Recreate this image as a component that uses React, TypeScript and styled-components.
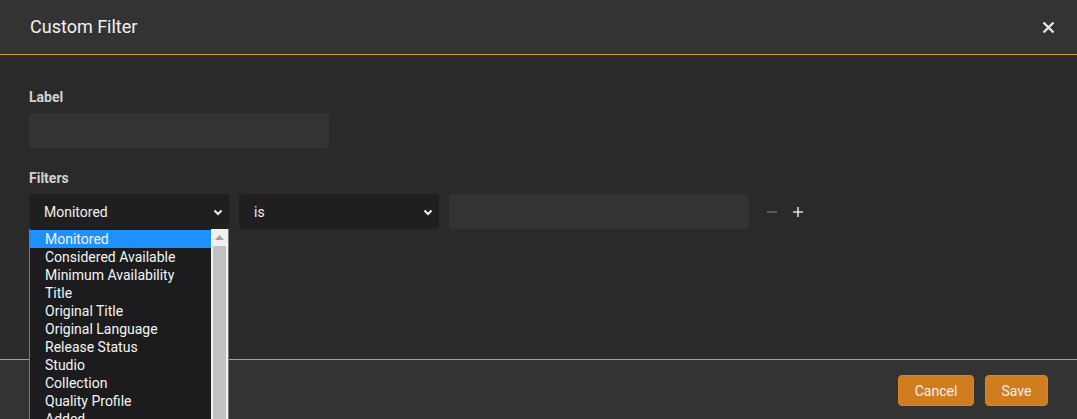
import React from "react";
import styled, { createGlobalStyle } from "styled-components";

const Global = createGlobalStyle`
  html, body { margin: 0; padding: 0; background: #2a2a2a; }
  body { font-family: Roboto, "Open Sans", sans-serif; color: #ccc; overflow: hidden; }
  * { box-sizing: border-box; }
`;

const Modal = styled.div`
  width: 1077px;
  height: 419px;
  display: flex;
  flex-direction: column;
  background: #2a2a2a;
  overflow: hidden;
`;

const Header = styled.div`
  height: 55px;
  flex: none;
  display: flex;
  align-items: center;
  justify-content: space-between;
  padding: 0 22px 0 30px;
  background: #333333;
  border-bottom: 1px solid #d89b2a;
`;

const Title = styled.div`
  font-size: 18px;
  color: #f2f2f2;
  padding-bottom: 1px;
`;

const Close = styled.button`
  background: none;
  border: 0;
  padding: 0;
  width: 14px;
  height: 14px;
  display: flex;
  align-items: center;
  justify-content: center;
  cursor: pointer;
`;

const Body = styled.div`
  flex: 1;
  padding: 32px 29px 0;
  display: flex;
  flex-direction: column;
`;

const FieldLabel = styled.div`
  font-size: 14px;
  font-weight: 700;
  color: #d2d2d2;
  line-height: 20px;
  margin-bottom: 6px;
`;

const TextInput = styled.div<{ $w: number }>`
  width: ${(p) => p.$w}px;
  height: 35px;
  background: #333333;
  border-radius: 4px;
`;

const Group = styled.div`
  margin-bottom: 20px;
`;

const Row = styled.div`
  display: flex;
  align-items: center;
  gap: 10px;
`;

const SelectWrap = styled.div`
  position: relative;
`;

const Select = styled.div`
  width: 200px;
  height: 35px;
  background: #1f1f1f;
  border-radius: 4px;
  display: flex;
  align-items: center;
  justify-content: space-between;
  padding: 0 4px 0 15px;
  font-size: 14px;
  color: #f0f0f0;
`;

const Actions = styled.div`
  display: flex;
  align-items: center;
  gap: 14px;
  margin-left: 7px;
`;

const IconBtn = styled.div<{ $c: string }>`
  display: flex;
  color: ${(p) => p.$c};
`;

const List = styled.div`
  position: absolute;
  top: 35px;
  left: 0;
  width: 200px;
  height: 200px;
  background: #1c1c1e;
  border: 1px solid #7a7a7a;
  border-top: 0;
  display: flex;
`;

const Items = styled.div`
  flex: 1;
  display: flex;
  flex-direction: column;
  padding-top: 1px;
`;

const Item = styled.div<{ $active?: boolean }>`
  height: 18px;
  line-height: 18px;
  font-size: 14px;
  padding-left: 15px;
  color: #f4f4f4;
  background: ${(p) => (p.$active ? "#1e90ff" : "transparent")};
  white-space: nowrap;
`;

const Scrollbar = styled.div`
  width: 17px;
  background: #f0f0f0;
  display: flex;
  flex-direction: column;
  align-items: center;
  padding: 0 2px;
`;

const ArrowBox = styled.div`
  height: 17px;
  display: flex;
  align-items: center;
  justify-content: center;
`;

const Thumb = styled.div`
  flex: 1;
  width: 13px;
  background: #c1c1c1;
`;

const Footer = styled.div`
  height: 60px;
  flex: none;
  background: #333333;
  border-top: 1px solid #d89b2a;
  display: flex;
  justify-content: flex-end;
  align-items: flex-start;
  padding: 15px 29px 0 0;
  gap: 11px;
`;

const Button = styled.button<{ $w: number }>`
  width: ${(p) => p.$w}px;
  height: 31px;
  background: #cf7d1e;
  border: 1px solid #d5862a;
  border-radius: 4px;
  color: #f3f3f3;
  font-family: Roboto, sans-serif;
  font-size: 14px;
  padding: 0;
`;

const Chevron = () => (
  <svg width="14" height="14" viewBox="0 0 14 14">
    <path d="M3.5 5.5 L7 9 L10.5 5.5" fill="none" stroke="#eee" strokeWidth="2" />
  </svg>
);

const options = [
  "Monitored",
  "Considered Available",
  "Minimum Availability",
  "Title",
  "Original Title",
  "Original Language",
  "Release Status",
  "Studio",
  "Collection",
  "Quality Profile",
  "Added",
];

export default function App() {
  return (
    <Modal>
      <Global />
      <Header>
        <Title>Custom Filter</Title>
        <Close>
          <svg width="13" height="13" viewBox="0 0 13 13">
            <path d="M1.5 1.5 L11.5 11.5 M11.5 1.5 L1.5 11.5" stroke="#e6e6e6" strokeWidth="2.4" />
          </svg>
        </Close>
      </Header>
      <Body>
        <Group>
          <FieldLabel>Label</FieldLabel>
          <TextInput $w={300} />
        </Group>
        <Group>
          <FieldLabel>Filters</FieldLabel>
          <Row>
            <SelectWrap>
              <Select>
                Monitored
                <Chevron />
              </Select>
              <List>
                <Items>
                  {options.map((o, i) => (
                    <Item key={o} $active={i === 0}>
                      {o}
                    </Item>
                  ))}
                </Items>
                <Scrollbar>
                  <ArrowBox>
                    <svg width="9" height="5" viewBox="0 0 9 5">
                      <path d="M0 5 L4.5 0 L9 5 Z" fill="#a3a3a3" />
                    </svg>
                  </ArrowBox>
                  <Thumb />
                </Scrollbar>
              </List>
            </SelectWrap>
            <Select>
              is
              <Chevron />
            </Select>
            <TextInput $w={300} />
            <Actions>
              <IconBtn $c="#666">
                <svg width="12" height="12" viewBox="0 0 12 12">
                  <path d="M1 6 H11" stroke="currentColor" strokeWidth="1.6" />
                </svg>
              </IconBtn>
              <IconBtn $c="#dcdcdc">
                <svg width="12" height="12" viewBox="0 0 12 12">
                  <path d="M1 6 H11 M6 1 V11" stroke="currentColor" strokeWidth="1.6" />
                </svg>
              </IconBtn>
            </Actions>
          </Row>
        </Group>
      </Body>
      <Footer>
        <Button $w={76}>Cancel</Button>
        <Button $w={63}>Save</Button>
      </Footer>
    </Modal>
  );
}
